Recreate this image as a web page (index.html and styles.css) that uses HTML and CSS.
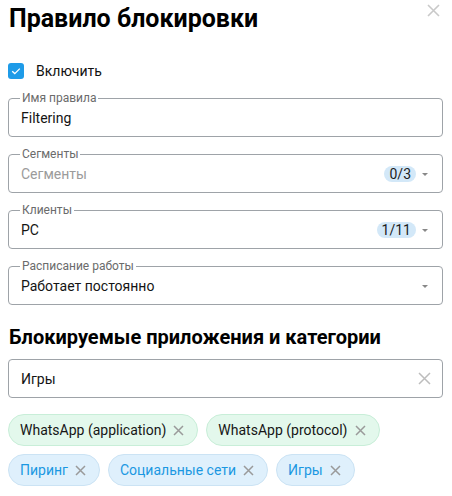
FILE: index.html
```html
<!DOCTYPE html>
<html lang="ru">
<head>
<meta charset="utf-8">
<title>Правило блокировки</title>
<link rel="stylesheet" href="styles.css">
</head>
<body>
<div class="dialog">
  <header class="head">
    <h1 class="title">Правило блокировки</h1>
    <button class="close" aria-label="Закрыть">
      <svg width="13" height="13" viewBox="0 0 13 13"><path d="M1 1L12 12M12 1L1 12" stroke="#c9c9c9" stroke-width="1.6" fill="none"/></svg>
    </button>
  </header>

  <label class="check-row">
    <span class="checkbox">
      <svg width="16" height="16" viewBox="0 0 16 16"><path d="M4.2 8.2L6.8 10.6L11.8 5.6" stroke="#fff" stroke-width="1.3" fill="none"/></svg>
    </span>
    <span class="check-label">Включить</span>
  </label>

  <fieldset class="field">
    <legend class="legend">Имя правила</legend>
    <div class="field-body"><span class="value">Filtering</span></div>
  </fieldset>

  <fieldset class="field">
    <legend class="legend">Сегменты</legend>
    <div class="field-body">
      <span class="value placeholder">Сегменты</span>
      <span class="badge">0/3</span>
      <span class="caret"></span>
    </div>
  </fieldset>

  <fieldset class="field">
    <legend class="legend">Клиенты</legend>
    <div class="field-body">
      <span class="value">PC</span>
      <span class="badge">1/11</span>
      <span class="caret"></span>
    </div>
  </fieldset>

  <fieldset class="field">
    <legend class="legend">Расписание работы</legend>
    <div class="field-body">
      <span class="value">Работает постоянно</span>
      <span class="caret"></span>
    </div>
  </fieldset>

  <h2 class="section">Блокируемые приложения и категории</h2>

  <div class="search">
    <span class="value">Игры</span>
    <svg class="clear" width="13" height="13" viewBox="0 0 13 13"><path d="M1 1L12 12M12 1L1 12" stroke="#bdbdbd" stroke-width="1.5" fill="none"/></svg>
  </div>

  <div class="chips">
    <span class="chip green">WhatsApp (application)<svg class="x" width="11" height="11" viewBox="0 0 11 11"><path d="M1 1L10 10M10 1L1 10" stroke="#9a9a9a" stroke-width="1.5" fill="none"/></svg></span>
    <span class="chip green">WhatsApp (protocol)<svg class="x" width="11" height="11" viewBox="0 0 11 11"><path d="M1 1L10 10M10 1L1 10" stroke="#9a9a9a" stroke-width="1.5" fill="none"/></svg></span>
    <span class="chip blue">Пиринг<svg class="x" width="11" height="11" viewBox="0 0 11 11"><path d="M1 1L10 10M10 1L1 10" stroke="#9a9a9a" stroke-width="1.5" fill="none"/></svg></span>
    <span class="chip blue">Социальные сети<svg class="x" width="11" height="11" viewBox="0 0 11 11"><path d="M1 1L10 10M10 1L1 10" stroke="#9a9a9a" stroke-width="1.5" fill="none"/></svg></span>
    <span class="chip blue">Игры<svg class="x" width="11" height="11" viewBox="0 0 11 11"><path d="M1 1L10 10M10 1L1 10" stroke="#9a9a9a" stroke-width="1.5" fill="none"/></svg></span>
  </div>
</div>
</body>
</html>
```

FILE: styles.css
```css
* { box-sizing: border-box; }
html, body { margin: 0; padding: 0; background: #fff; }
body {
  font-family: Roboto, "Noto Sans", "Liberation Sans", sans-serif;
  color: #1a1a1a;
}
.dialog {
  width: 452px;
  padding: 0 9px 0 8px;
}
.head {
  display: flex;
  justify-content: space-between;
  align-items: flex-start;
  height: 34px;
  padding-top: 3px;
}
.title {
  margin: 0 0 0 1px;
  font-size: 25px;
  line-height: 32px;
  font-weight: 700;
  color: #000;
}
.close {
  border: 0;
  background: none;
  padding: 0;
  margin: 1px 3px 0 0;
  width: 13px;
  height: 13px;
  display: flex;
}
.check-row {
  display: flex;
  align-items: center;
  height: 24px;
  margin-top: 25px;
}
.checkbox {
  width: 16px;
  height: 16px;
  border-radius: 3px;
  background: #1e9be8;
  display: flex;
}
.check-label {
  margin-left: 12px;
  font-size: 14px;
  color: #111;
}
.field {
  margin: 8px 0 0;
  padding: 0 11px 5px 11px;
  border: 1px solid #9ea3a8;
  border-radius: 4px;
  min-width: 0;
}
.field + .field { margin-top: 10px; }
.legend {
  padding: 0 2px;
  font-size: 12px;
  line-height: 14px;
  color: #6b6b6b;
}
.field-body {
  display: flex;
  align-items: center;
  height: 26px;
  padding-left: 1px;
}
.value {
  font-size: 14px;
  color: #141414;
  flex: 1;
}
.placeholder { color: #9b9b9b; }
.badge {
  font-size: 14px;
  line-height: 16px;
  height: 16px;
  padding: 0 5px;
  border-radius: 8px;
  background: #d3e8f8;
  color: #1c1c1c;
}
.caret {
  width: 0;
  height: 0;
  border-left: 3px solid transparent;
  border-right: 3px solid transparent;
  border-top: 3px solid #888;
  margin: 1px 3px 0 6px;
}
.section {
  margin: 20px 0 0 1px;
  font-size: 20px;
  line-height: 24px;
  font-weight: 700;
  color: #000;
}
.search {
  display: flex;
  align-items: center;
  height: 39px;
  margin-top: 10px;
  padding: 0 11px 0 12px;
  border: 1px solid #9ea3a8;
  border-radius: 4px;
}
.clear { display: block; }
.chips {
  display: flex;
  flex-wrap: wrap;
  gap: 8px;
  margin-top: 16px;
  width: 380px;
}
.chip {
  display: inline-flex;
  align-items: center;
  height: 32px;
  padding: 0 13px 0 11px;
  border-radius: 16px;
  border: 1px solid;
  font-size: 14px;
}
.chip .x { margin-left: 7px; display: block; }
.green { background: #e3f8ec; border-color: #c8eed8; color: #161616; }
.blue { background: #dff0fc; border-color: #cbe3f4; color: #1b98e2; }
```
